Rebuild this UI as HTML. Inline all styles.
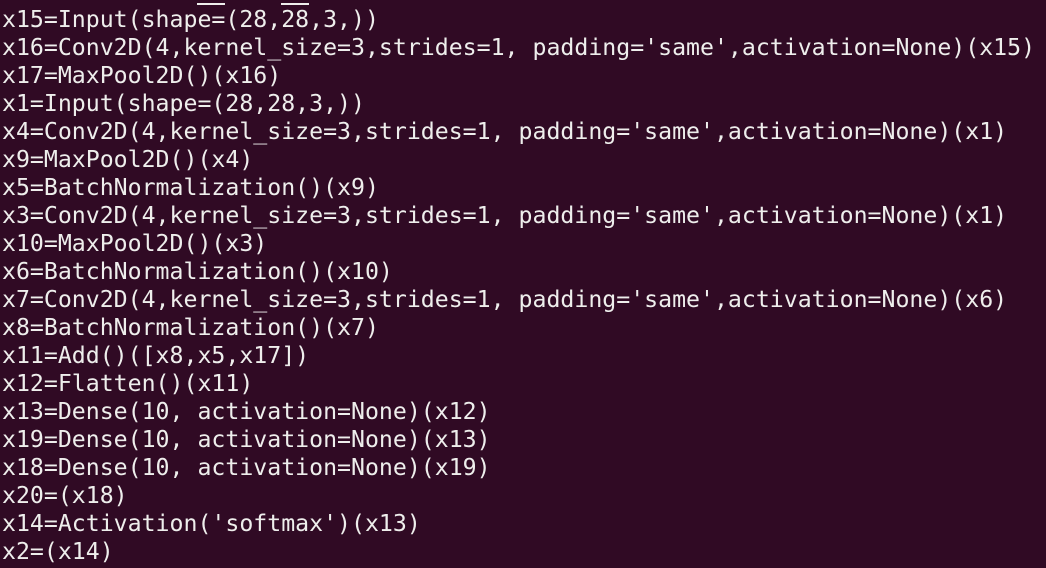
<!DOCTYPE html>
<html><head><style>
html,body{margin:0;padding:0;background:#300a24;width:1046px;height:568px;overflow:hidden}
pre{position:absolute;left:2px;top:6px;margin:0;font-family:"DejaVu Sans Mono","Liberation Mono",monospace;font-size:23.2px;line-height:28px;color:#eeeeec;}
.u{position:absolute;top:3px;height:2px;background:#eeeeec}
</style></head><body>
<div class="u" style="left:197px;width:28px"></div>
<div class="u" style="left:281px;width:28px"></div>
<pre>x15=Input(shape=(28,28,3,))
x16=Conv2D(4,kernel_size=3,strides=1, padding='same',activation=None)(x15)
x17=MaxPool2D()(x16)
x1=Input(shape=(28,28,3,))
x4=Conv2D(4,kernel_size=3,strides=1, padding='same',activation=None)(x1)
x9=MaxPool2D()(x4)
x5=BatchNormalization()(x9)
x3=Conv2D(4,kernel_size=3,strides=1, padding='same',activation=None)(x1)
x10=MaxPool2D()(x3)
x6=BatchNormalization()(x10)
x7=Conv2D(4,kernel_size=3,strides=1, padding='same',activation=None)(x6)
x8=BatchNormalization()(x7)
x11=Add()([x8,x5,x17])
x12=Flatten()(x11)
x13=Dense(10, activation=None)(x12)
x19=Dense(10, activation=None)(x13)
x18=Dense(10, activation=None)(x19)
x20=(x18)
x14=Activation('softmax')(x13)
x2=(x14)</pre>
</body></html>
